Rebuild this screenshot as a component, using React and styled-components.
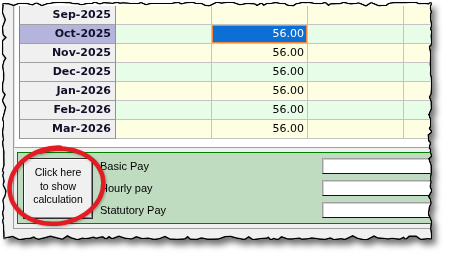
import React from "react";
import styled, { createGlobalStyle } from "styled-components";

const GlobalStyle = createGlobalStyle`
  html, body {
    margin: 0;
    padding: 0;
    background: #fff;
  }
  body {
    font-family: "Liberation Sans", Arial, sans-serif;
  }
`;

// small seeded random so the torn edge is the same on every load
const seeded = (seed) => () => {
  seed = (seed + 0x6d2b79f5) | 0;
  let t = Math.imul(seed ^ (seed >>> 15), 1 | seed);
  t = (t + Math.imul(t ^ (t >>> 7), 61 | t)) ^ t;
  return ((t ^ (t >>> 14)) >>> 0) / 4294967296;
};

const tornEdge = (w, h) => {
  const r = seeded(11);
  const jag = () => (r() < 0.22 ? 2.5 + r() * 1.5 : r() * 1.8);
  const step = () => 2 + r() * 6;
  const pts = [];
  for (let x = 0; x < w; x += step()) pts.push([x, jag()]);
  for (let y = 0; y < h; y += step()) pts.push([w - jag(), y]);
  for (let x = w; x > 0; x -= step()) pts.push([x, h - jag()]);
  for (let y = h; y > 0; y -= step()) pts.push([jag(), y]);
  return `polygon(${pts
    .map(([a, b]) => `${a.toFixed(1)}px ${b.toFixed(1)}px`)
    .join(",")})`;
};

// hand drawn ring round the button
const ringPath = () => {
  const cx = 56;
  const cy = 186;
  const rx = 48;
  const ry = 37;
  const rot = (-8 * Math.PI) / 180;
  const t0 = -1.8;
  const span = Math.PI * 2 + 0.45;
  const pts = [];
  for (let i = 0; i <= 120; i++) {
    const t = t0 + (span * i) / 120;
    const k = (t - t0) / (Math.PI * 2);
    const a = rx * (1 - 0.035 * k) * Math.cos(t);
    const b = ry * (1 + 0.03 * k) * Math.sin(t);
    pts.push([
      cx + a * Math.cos(rot) - b * Math.sin(rot),
      cy + a * Math.sin(rot) + b * Math.cos(rot),
    ]);
  }
  return "M" + pts.map(([x, y]) => `${x.toFixed(1)} ${y.toFixed(1)}`).join(" L");
};

const months = [
  "Sep-2025",
  "Oct-2025",
  "Nov-2025",
  "Dec-2025",
  "Jan-2026",
  "Feb-2026",
  "Mar-2026",
];

const fields = ["Basic Pay", "Hourly pay", "Statutory Pay"];

const App = () => {
  const selectedRow = 1;

  return (
    <Page>
      <GlobalStyle />
      <Shadow>
        <Frame style={{ clipPath: tornEdge(428, 236) }}>
          <Outer>
            <GridArea>
              <Grid>
                {months.map((m, i) => (
                  <React.Fragment key={m}>
                    <HeaderCell $selected={i === selectedRow}>{m}</HeaderCell>
                    <Cell $odd={i % 2 === 1} />
                    <Cell $odd={i % 2 === 1} $selected={i === selectedRow}>
                      {i > 0 ? "56.00" : ""}
                    </Cell>
                    <Cell $odd={i % 2 === 1} />
                    <Cell $odd={i % 2 === 1} />
                  </React.Fragment>
                ))}
              </Grid>
            </GridArea>
            <Panel>
              <CalcButton>
                Click here
                <br />
                to show
                <br />
                calculation
              </CalcButton>
              <Form>
                {fields.map((f) => (
                  <React.Fragment key={f}>
                    <Label>{f}</Label>
                    <Field />
                  </React.Fragment>
                ))}
              </Form>
            </Panel>
          </Outer>
        </Frame>
      </Shadow>
      <Ring width="449" height="263" viewBox="0 0 449 263">
        <path
          d={ringPath()}
          fill="none"
          stroke="#e31b22"
          strokeWidth="4.5"
          strokeLinecap="round"
          strokeLinejoin="round"
        />
      </Ring>
    </Page>
  );
};

const Page = styled.div`
  position: relative;
  width: 449px;
  height: 263px;
  padding: 3px 0 0 3px;
  box-sizing: border-box;
  overflow: hidden;
`;

//----TORN SCREENSHOT FRAME----
const Shadow = styled.div`
  width: 428px;
  height: 236px;
  filter: drop-shadow(1px 0 0 #000) drop-shadow(-1px 0 0 #000)
    drop-shadow(0 1px 0 #000) drop-shadow(0 -1px 0 #000)
    drop-shadow(4px 5px 3px rgba(0, 0, 0, 0.55));
`;

const Frame = styled.div`
  width: 428px;
  height: 236px;
  background: #f0f0f0;
  overflow: hidden;
`;

const Outer = styled.div`
  display: flex;
  flex-direction: column;
  gap: 4px;
  width: 520px;
  margin-left: 10px;
  padding-bottom: 4px;
  border-left: 1px solid #a0a0a0;
  border-bottom: 1px solid #a0a0a0;
`;

//----GRID----
const GridArea = styled.div`
  height: 145px;
  box-sizing: border-box;
  padding: 3px 0 0 4px;
  background: #fff;
  border-left: 1px solid #e2e2e2;
  border-bottom: 1px solid #a0a0a0;
  overflow: hidden;
`;

const Grid = styled.div`
  display: grid;
  grid-template-columns: 97px repeat(4, 96px);
  grid-auto-rows: 19px;
`;

const HeaderCell = styled.div`
  box-sizing: border-box;
  padding-right: 4px;
  background: ${(p) => (p.$selected ? "#b4b4dc" : "#f0f0f0")};
  border-left: 1px solid #808080;
  border-right: 1px solid #909090;
  border-bottom: 1px solid #a0a0a0;
  color: #10102a;
  font: bold 11px/18px "DejaVu Sans", Verdana, sans-serif;
  text-align: right;
`;

const Cell = styled.div`
  box-sizing: border-box;
  padding-right: 3px;
  background: ${(p) =>
    p.$selected ? "#0b6fd6" : p.$odd ? "#e8fde8" : "#fefee2"};
  box-shadow: ${(p) => (p.$selected ? "inset 0 0 0 1px #f28a3a" : "none")};
  border-right: 1px solid #c4c4c4;
  border-bottom: 1px solid #c4c4c4;
  color: ${(p) => (p.$selected ? "#fff" : "#000")};
  font: 11px/18px "DejaVu Sans", Verdana, sans-serif;
  text-align: right;
`;

//----CALCULATION PANEL----
const Panel = styled.div`
  display: flex;
  align-items: flex-start;
  height: 72px;
  box-sizing: border-box;
  margin-left: 3px;
  padding: 5px 0 0 5px;
  background: #c0dcc0;
  border: 1px solid #008000;
  border-right: none;
`;

const CalcButton = styled.button`
  display: flex;
  align-items: center;
  justify-content: center;
  width: 70px;
  height: 61px;
  box-sizing: border-box;
  padding: 0 0 4px;
  background: #f0f0f0;
  border: 1px solid #2e2e2e;
  box-shadow: inset 1px 1px 0 #fff, inset -1px -1px 0 #8a8a8a;
  color: #000;
  font: 10.5px/13.5px "Liberation Sans", Arial, sans-serif;
  text-align: center;
`;

const Form = styled.div`
  display: grid;
  grid-template-columns: 222px 140px;
  grid-auto-rows: 16px;
  row-gap: 6px;
  align-items: center;
  margin-left: 7px;
`;

const Label = styled.span`
  color: #000;
  font: 11px/16px "Liberation Sans", Arial, sans-serif;
`;

const Field = styled.div`
  height: 16px;
  box-sizing: border-box;
  background: #fff;
  border-top: 1px solid #a0a0a0;
  border-left: 1px solid #a0a0a0;
  border-bottom: 1px solid #111;
  box-shadow: inset 1px 1px 0 #d0d0d0;
`;

//----ANNOTATION----
const Ring = styled.svg`
  position: absolute;
  top: 0;
  left: 0;
  pointer-events: none;
  filter: drop-shadow(1px 1px 1px rgba(0, 0, 0, 0.3));
`;

export default App;
